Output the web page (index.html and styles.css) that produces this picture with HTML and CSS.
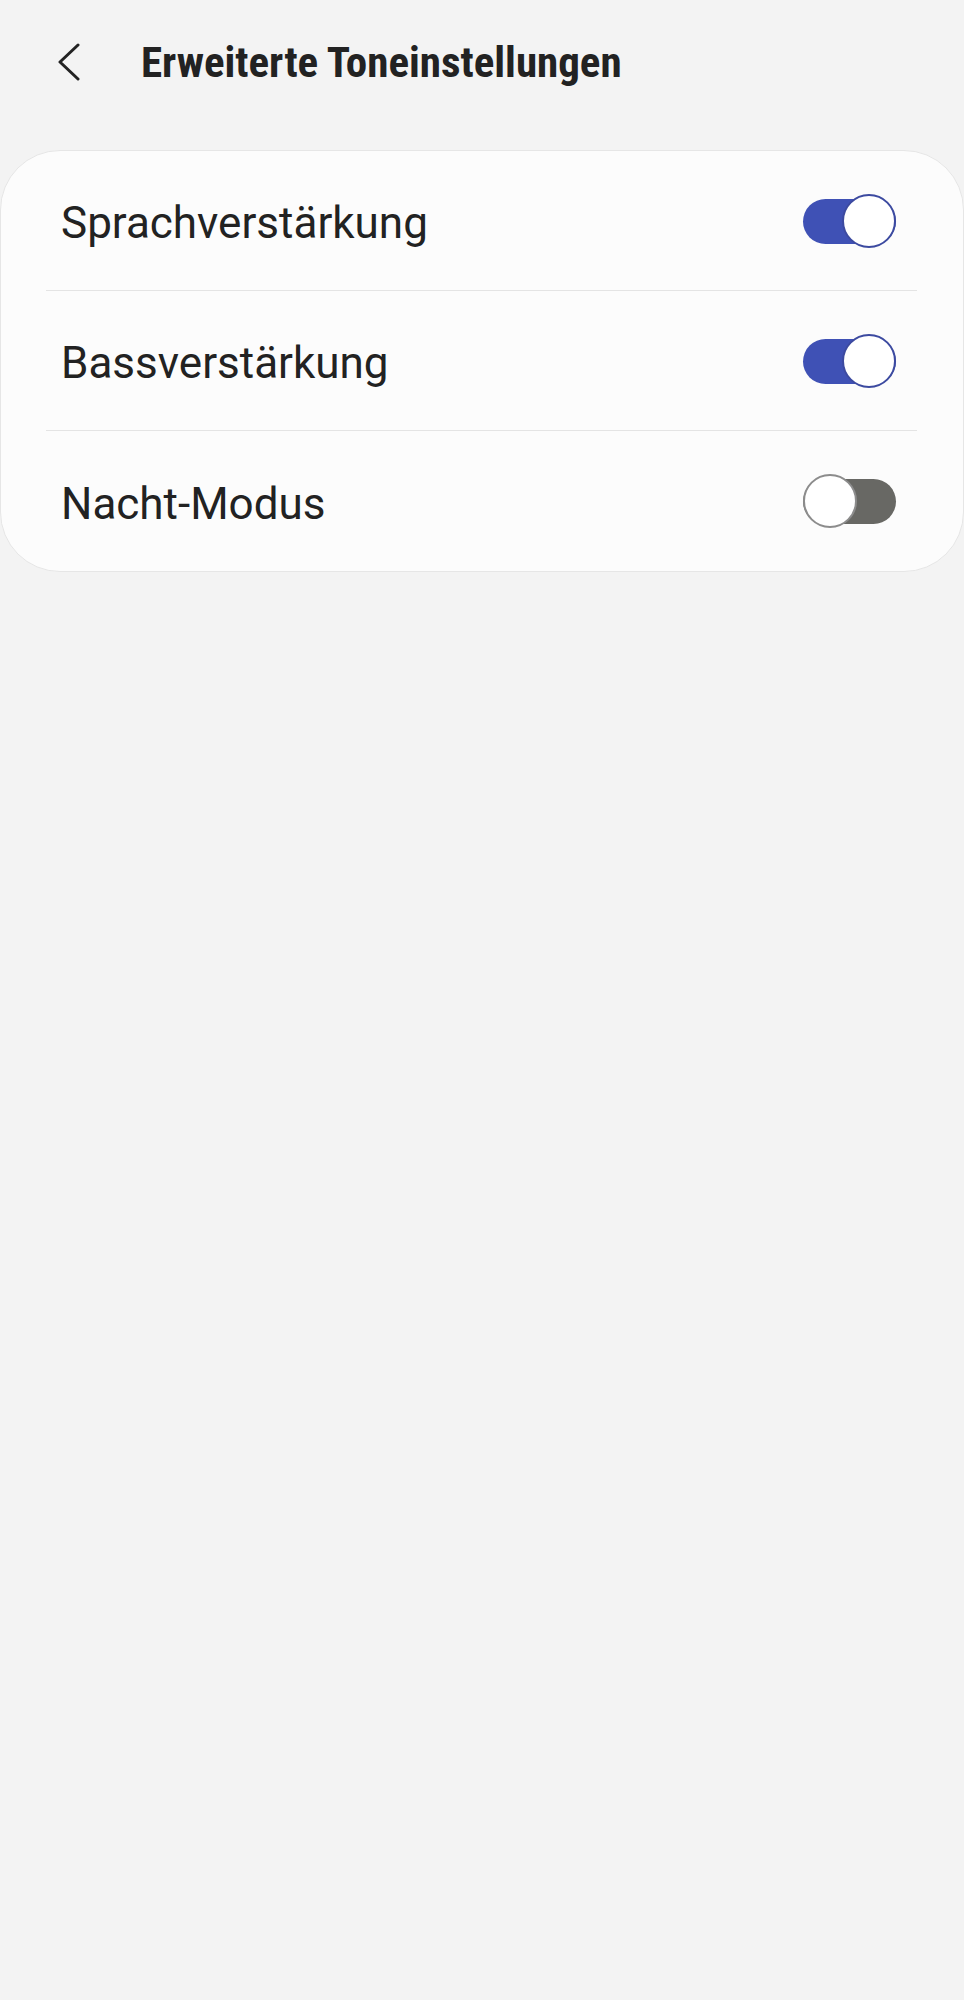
FILE: index.html
```html
<!DOCTYPE html>
<html lang="de">
<head>
    <meta charset="UTF-8">
    <meta name="viewport" content="width=device-width, initial-scale=1.0">
    <title>Erweiterte Toneinstellungen</title>
    <link rel="stylesheet" href="styles.css">
</head>
<body>

<div class="header">
    <button class="back-btn" aria-label="Zurück">
        <svg width="26" height="38" viewBox="0 0 26 38">
            <polyline points="22,2 4,19 22,36" fill="none" stroke="#222" stroke-width="3" stroke-linecap="round" stroke-linejoin="round"/>
        </svg>
    </button>
    <h1>Erweiterte Toneinstellungen</h1>
</div>

<div class="card">
    <div class="row">
        <span class="row-label">Sprachverstärkung</span>
        <span class="switch on"><span class="track"></span><span class="thumb"></span></span>
    </div>
    <div class="row">
        <span class="row-label">Bassverstärkung</span>
        <span class="switch on"><span class="track"></span><span class="thumb"></span></span>
    </div>
    <div class="row">
        <span class="row-label">Nacht-Modus</span>
        <span class="switch"><span class="track"></span><span class="thumb"></span></span>
    </div>
</div>

</body>
</html>
```

FILE: styles.css
```css
/* General styling */
body {
    font-family: Roboto, "Noto Sans", sans-serif;
    margin: 0;
    padding: 0;
    background-color: #f3f3f3;
    color: #222;
}
.header {
    display: flex;
    align-items: center;
    height: 124px;
}
.back-btn {
    width: 141px;
    height: 60px;
    padding: 0 0 0 56px;
    background: none;
    border: none;
    display: flex;
    align-items: center;
}
h1 {
    margin: 0;
    font-family: "Roboto Condensed", Roboto, sans-serif;
    font-stretch: condensed;
    font-weight: bold;
    font-size: 43px;
    color: #222;
}
.card {
    margin-top: 26px;
    background-color: #fcfcfc;
    border: 1px solid #e6e6e6;
    border-radius: 60px;
    padding: 0 46px 0 45px;
}
.row {
    display: flex;
    align-items: center;
    justify-content: space-between;
    height: 140px;
    box-sizing: border-box;
    padding: 0 21px 0 15px;
    border-bottom: 1px solid #e4e4e4;
}
.row:last-child {
    border-bottom: none;
}
.row-label {
    font-size: 44px;
    padding-top: 5px;
}
/* Switch styling */
.switch {
    position: relative;
    width: 93px;
    height: 54px;
}
.track {
    position: absolute;
    left: 0;
    right: 0;
    top: 5px;
    height: 45px;
    border-radius: 23px;
    background-color: #686864;
}
.thumb {
    position: absolute;
    top: 0;
    left: 0;
    width: 54px;
    height: 54px;
    box-sizing: border-box;
    border-radius: 50%;
    background-color: #fff;
    border: 2.5px solid #8c8c8c;
}
.switch.on .track {
    background-color: #3f51b5;
}
.switch.on .thumb {
    left: auto;
    right: 0;
    border-color: #3c4aa0;
}
```
